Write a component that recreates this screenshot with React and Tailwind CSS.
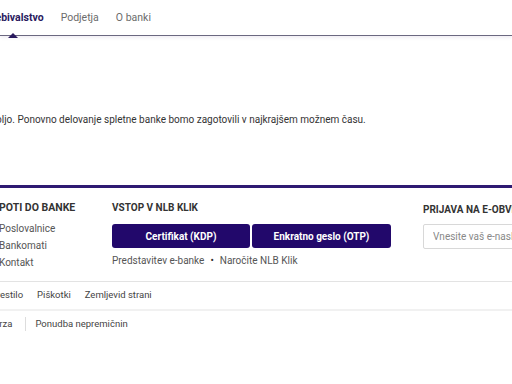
import React from 'react';

export default function App() {
  const nav = ['Podjetja', 'O banki'];
  const paths = ['Poslovalnice', 'Bankomati', 'Kontakt'];

  return (
    <div className="w-[512px] h-[384px] overflow-hidden bg-white font-['Roboto',sans-serif]">
      {/* Top navigation */}
      <header className="relative h-[36px] border-b border-[#6b6880] shadow-[0_2px_3px_rgba(60,40,120,0.08)]">
        <nav className="flex items-center h-[35px] ml-[-15px] gap-[17px] text-[10.5px] whitespace-nowrap">
          <a className="relative font-bold text-[#2a1a5e]">
            Prebivalstvo
            <span className="absolute left-[23px] top-[23px] w-0 h-0 border-l-[5px] border-r-[5px] border-b-[5px] border-l-transparent border-r-transparent border-b-[#2a1a5e]" />
          </a>
          {nav.map((n) => (
            <a key={n} className="text-[#6b6b6b]">{n}</a>
          ))}
        </nav>
      </header>

      {/* Message */}
      <main className="h-[149px] pt-[76px]">
        <p className="ml-[-138px] text-[10px] text-[#333] whitespace-nowrap">
          Spletna banka trenutno ni na voljo. Ponovno delovanje spletne banke bomo zagotovili v najkrajšem možnem času.
        </p>
      </main>

      {/* Footer */}
      <footer className="border-t-[3px] border-[#2e1a72]">
        <div className="flex h-[93px] pt-[13px] whitespace-nowrap">
          <div className="w-[113px] shrink-0 ml-[-1px]">
            <h4 className="text-[10.5px] font-bold text-[#333] leading-[14px]">POTI DO BANKE</h4>
            <ul className="mt-[5px] text-[10px] text-[#555] leading-[17px]">
              {paths.map((p) => (
                <li key={p}>{p}</li>
              ))}
            </ul>
          </div>
          <div className="w-[311px] shrink-0">
            <h4 className="text-[10px] font-bold text-[#333] leading-[14px]">VSTOP V NLB KLIK</h4>
            <div className="flex gap-[2px] mt-[9px]">
              <button className="w-[138px] h-[24px] rounded-[3px] bg-[#22086b] text-white text-[10px] font-bold">
                Certifikat (KDP)
              </button>
              <button className="w-[139px] h-[24px] rounded-[3px] bg-[#22086b] text-white text-[10px] font-bold">
                Enkratno geslo (OTP)
              </button>
            </div>
            <div className="mt-[5px] flex items-center gap-[6px] text-[10px] text-[#555]">
              <span>Predstavitev e-banke</span>
              <span className="text-[#333]">•</span>
              <span>Naročite NLB Klik</span>
            </div>
          </div>
          <div className="shrink-0">
            <h4 className="text-[10px] font-bold text-[#333] leading-[14px] pt-[2px]">PRIJAVA NA E-OBVEŠČANJE</h4>
            <input
              className="mt-[7px] w-[160px] h-[25px] border border-[#d8d8d8] rounded-[2px] px-[9px] text-[10px] placeholder-[#888]"
              placeholder="Vnesite vaš e-naslov"
            />
          </div>
        </div>

        <div className="h-[28px] border-t border-[#e3e3e3] flex items-center ml-[-47px] gap-[14px] text-[9.5px] text-[#444] whitespace-nowrap">
          <span>Pravno obvestilo</span>
          <span>Piškotki</span>
          <span>Zemljevid strani</span>
        </div>

        <div className="h-[28px] border-t-2 border-[#f1f1f1] flex items-center ml-[-12px] text-[9.5px] text-[#444] whitespace-nowrap">
          <span className="pr-[13px] border-r border-[#ddd]">Borza</span>
          <span className="pl-[9px]">Ponudba nepremičnin</span>
        </div>
      </footer>
    </div>
  );
}
